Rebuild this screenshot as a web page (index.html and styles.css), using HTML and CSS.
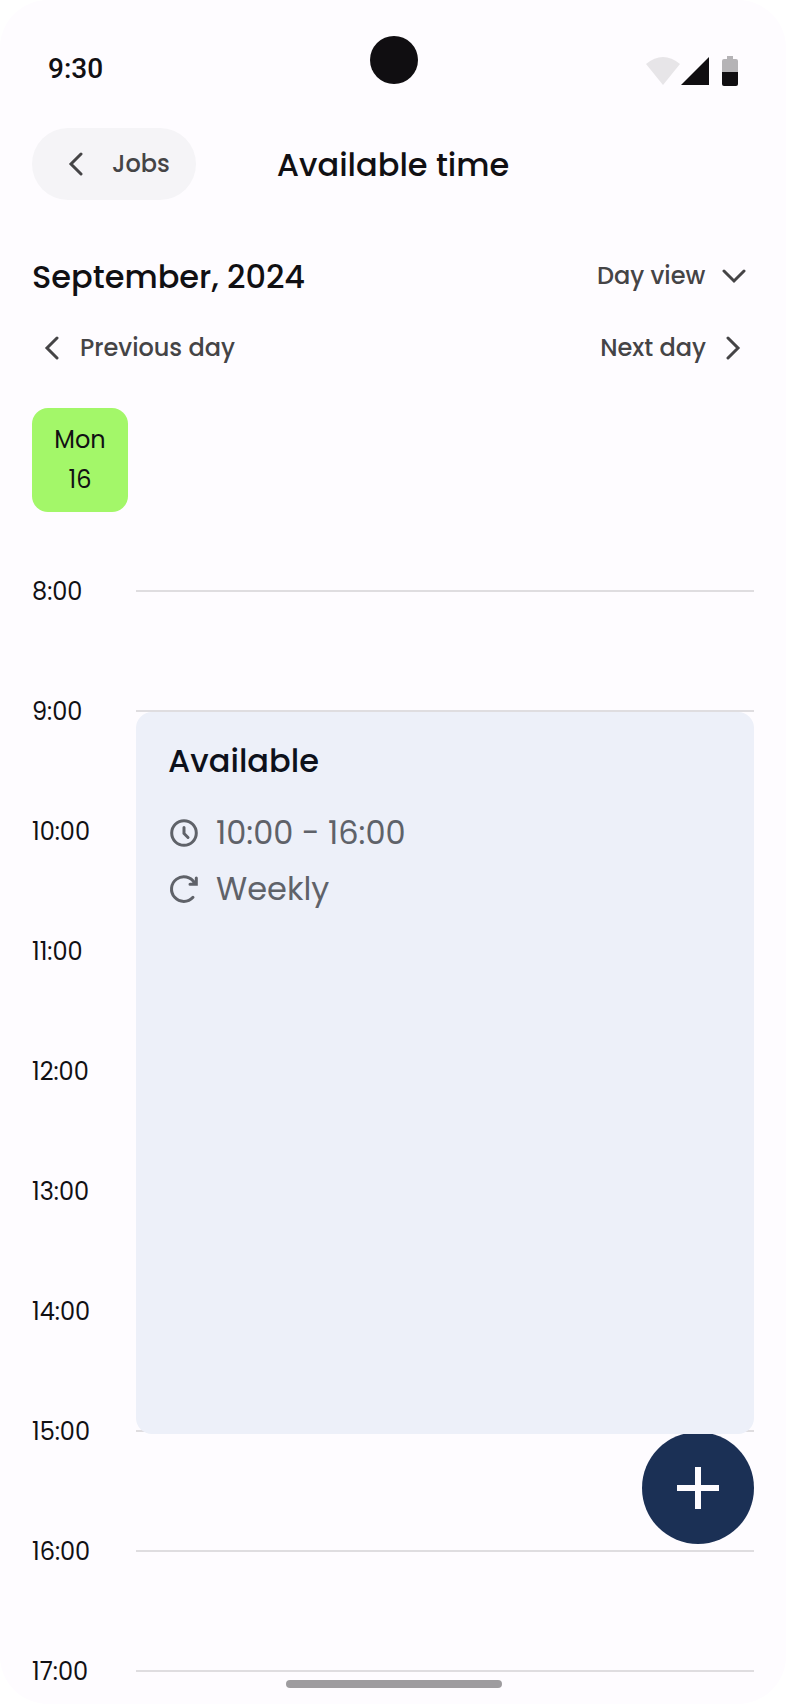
FILE: index.html
```html
<!DOCTYPE html>
<html lang="en">
<head>
<meta charset="utf-8">
<meta name="viewport" content="width=device-width, initial-scale=1">
<title>Available time</title>
<link rel="stylesheet" href="styles.css">
</head>
<body>
<div class="screen">
  <div class="status">
    <span class="clock">9:30</span>
    <span class="camera"></span>
    <svg class="indicators" width="94" height="30" viewBox="0 0 94 30" aria-hidden="true">
      <path d="M0 8Q17-6 34 8L17 29Z" fill="#e7e5e8"/>
      <path d="M35 29L63 1V29Z" fill="#100e11"/>
      <path d="M76 16V5a2 2 0 0 1 2-2h3V0h6v3h3a2 2 0 0 1 2 2v11Z" fill="#b5b3b6"/>
      <path d="M76 16h16v12a2 2 0 0 1-2 2H78a2 2 0 0 1-2-2Z" fill="#100e11"/>
    </svg>
  </div>

  <header class="header">
    <button class="back" type="button">
      <svg class="icon" viewBox="0 0 24 24" aria-hidden="true"><path d="M17 2L7 12L17 22"/></svg>
      Jobs
    </button>
    <h1 class="title">Available time</h1>
  </header>

  <main class="content">
    <div class="row">
      <h2 class="title">September, 2024</h2>
      <label class="view">
        <select class="view-select" aria-label="Calendar view"><option>Day view</option></select>
        <svg class="icon" viewBox="0 0 24 24" aria-hidden="true"><path d="M2 7L12 17L22 7"/></svg>
      </label>
    </div>
    <nav class="row">
      <button class="step step-previous" type="button">
        <svg class="icon" viewBox="0 0 24 24" aria-hidden="true"><path d="M17 2L7 12L17 22"/></svg>
        Previous day
      </button>
      <button class="step" type="button">
        Next day
        <svg class="icon" viewBox="0 0 24 24" aria-hidden="true"><path d="M6 2L16 12L6 22"/></svg>
      </button>
    </nav>

    <button class="day" type="button"><span>Mon</span><span>16</span></button>

    <section class="timeline">
      <div class="hour"><time>8:00</time></div>
      <div class="hour"><time>9:00</time></div>
      <div class="hour"><time>10:00</time></div>
      <div class="hour"><time>11:00</time></div>
      <div class="hour"><time>12:00</time></div>
      <div class="hour"><time>13:00</time></div>
      <div class="hour"><time>14:00</time></div>
      <div class="hour"><time>15:00</time></div>
      <div class="hour"><time>16:00</time></div>
      <div class="hour"><time>17:00</time></div>
      <article class="event">
        <h3 class="title">Available</h3>
        <p class="detail">
          <svg class="detail-icon" viewBox="0 0 32 32" aria-hidden="true"><circle cx="16" cy="16" r="12.3"/><path d="M16 10.5V16.5L20 20.5"/></svg>
          10:00 - 16:00
        </p>
        <p class="detail">
          <svg class="detail-icon" viewBox="0 0 32 32" aria-hidden="true"><path d="M25 24.3A12.3 12.3 0 1 1 26.5 10M28.3 5V11.3H22"/></svg>
          Weekly
        </p>
      </article>
    </section>
  </main>

  <button class="add" type="button" aria-label="Add available time">
    <svg width="42" height="42" viewBox="0 0 42 42" aria-hidden="true"><path d="M18 0h6v18h18v6H24v18h-6V24H0v-6h18Z" fill="#fefcff"/></svg>
  </button>
  <div class="home-bar"></div>
</div>
</body>
</html>
```
FILE: styles.css
```css
* {
  box-sizing: border-box;
}

body {
  margin: 0;
  background: #fff;
  color: #111013;
  font-family: Poppins, Inter, sans-serif;
  font-size: 24px;
  line-height: 32px;
}

h1, h2, h3, p {
  margin: 0;
}

button, select {
  margin: 0;
  padding: 0;
  border: 0;
  background: none;
  color: #454446;
  font: inherit;
  font-weight: 500;
}

.screen {
  position: relative;
  min-height: 100vh;
  overflow: hidden;
  border-radius: 48px;
  background: #fefcff;
}

.status {
  display: grid;
  grid-template-columns: 1fr auto 1fr;
  align-items: end;
  height: 86px;
  padding: 0 46px 0 48px;
}

.clock {
  font-family: Roboto, sans-serif;
  font-size: 28px;
  font-weight: 500;
  line-height: 34px;
}

.camera {
  width: 48px;
  height: 48px;
  margin-bottom: 2px;
  border-radius: 50%;
  background: #100e11;
}

.indicators {
  justify-self: end;
}

.header {
  display: grid;
  grid-template-columns: 1fr auto 1fr;
  align-items: center;
  padding: 42px 32px 0;
}

.title {
  font-size: 32px;
  font-weight: 500;
  line-height: 40px;
}

.header .title, .row .title {
  padding-top: 2px;
}

.back {
  display: flex;
  align-items: center;
  justify-self: start;
  gap: 24px;
  height: 72px;
  padding: 0 26px 0 32px;
  border-radius: 36px;
  background: #f5f4f7;
}

.icon {
  width: 24px;
  height: 24px;
  fill: none;
  stroke: #454446;
  stroke-width: 3;
  stroke-linecap: round;
}

.content {
  padding: 56px 32px 0;
}

.row {
  display: flex;
  align-items: center;
  justify-content: space-between;
  height: 40px;
}

.row + .row {
  margin-top: 32px;
}

.view, .step {
  display: flex;
  align-items: center;
  gap: 16px;
  padding-right: 8px;
}

.step-previous {
  padding: 0 0 0 8px;
}

.view-select {
  appearance: none;
}

.day {
  display: flex;
  flex-direction: column;
  align-items: center;
  gap: 8px;
  width: 96px;
  margin-top: 40px;
  padding: 16px 0;
  border-radius: 16px;
  background: #a3f769;
  color: #111013;
  font-weight: 400;
}

.timeline {
  display: grid;
  grid-template-columns: 104px 1fr;
  grid-template-rows: repeat(9, 120px) auto;
  margin-top: 63px;
}

.hour {
  display: grid;
  grid-column: 1 / -1;
  grid-template-columns: subgrid;
  align-items: start;
  line-height: 34px;
}

.hour::after {
  content: "";
  height: 2px;
  margin-top: 15px;
  background: #dfdde0;
}

.event {
  z-index: 2;
  grid-column: 2;
  grid-row: 2 / 8;
  margin: 17px 0 -19px;
  padding: 29px 32px;
  border-radius: 16px;
  background: #edf0f9;
}

.hour:nth-child(1) { grid-row: 1; }
.hour:nth-child(2) { grid-row: 2; }
.hour:nth-child(3) { grid-row: 3; }
.hour:nth-child(4) { grid-row: 4; }
.hour:nth-child(5) { grid-row: 5; }
.hour:nth-child(6) { grid-row: 6; }
.hour:nth-child(7) { grid-row: 7; }
.hour:nth-child(8) { grid-row: 8; }
.hour:nth-child(9) { grid-row: 9; }
.hour:nth-child(10) { grid-row: 10; }

.event .title {
  color: #0d111b;
}

.detail {
  display: flex;
  align-items: center;
  gap: 16px;
  margin-top: 16px;
  color: #5f6269;
  font-size: 32px;
  line-height: 40px;
}

.title + .detail {
  margin-top: 32px;
}

.detail-icon {
  width: 32px;
  height: 32px;
  fill: none;
  stroke: #5f6269;
  stroke-width: 3;
  stroke-linecap: round;
}

.add {
  position: absolute;
  right: 32px;
  bottom: 160px;
  z-index: 1;
  display: grid;
  place-items: center;
  width: 112px;
  height: 112px;
  border-radius: 50%;
  background: #1b3055;
}

.home-bar {
  position: absolute;
  bottom: 16px;
  left: 50%;
  width: 216px;
  height: 8px;
  margin-left: -107px;
  border-radius: 4px;
  background: #9e9c9f;
}
```
